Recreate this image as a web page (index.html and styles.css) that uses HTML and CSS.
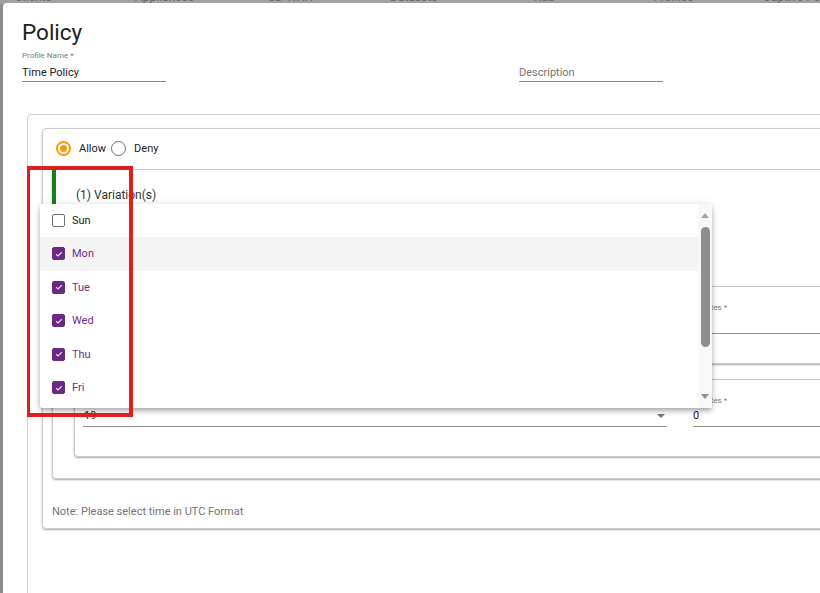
FILE: index.html
```html
<!DOCTYPE html>
<html>
<head>
<meta charset="utf-8">
<title>Policy</title>
<link rel="stylesheet" href="styles.css">
</head>
<body>
<div class="backdrop">
  <nav class="bg-nav">
    <span>Clients</span><span>Appliances</span><span>SD-WAN</span><span>Datasets</span><span>Hub</span><span>Profiles</span><span>Captive Portal</span>
  </nav>
  <div class="bg-main"><aside class="bg-side"></aside></div>
</div>

<div class="dialog">
  <h1 class="title">Policy</h1>
  <div class="top-fields">
    <div class="field">
      <label class="field-label">Profile Name *</label>
      <div class="field-value">Time Policy</div>
    </div>
    <div class="field">
      <label class="field-label">&nbsp;</label>
      <div class="field-value placeholder">Description</div>
    </div>
  </div>

  <section class="box-a">
    <div class="box-b">
      <div class="radio-row">
        <span class="radio on"></span><span class="radio-label">Allow</span>
        <span class="radio"></span><span class="radio-label">Deny</span>
      </div>
      <div class="box-b-body">
        <div class="variation">
          <div class="variation-head">(1) Variation(s)</div>
          <div class="days-field">
            <div class="tf-value empty">&nbsp;</div>
          </div>
          <div class="time-box">
            <div class="time-row">
              <div class="tf">
                <label class="field-label">Minutes *</label>
                <div class="tf-value select"><span>&nbsp;</span><span class="caret"></span></div>
              </div>
              <div class="tf">
                <label class="field-label">Minutes *</label>
                <div class="tf-value">&nbsp;</div>
              </div>
            </div>
          </div>
          <div class="time-box">
            <div class="time-row">
              <div class="tf">
                <label class="field-label">&nbsp;</label>
                <div class="tf-value select"><span>19</span><span class="caret"></span></div>
              </div>
              <div class="tf">
                <label class="field-label">Minutes *</label>
                <div class="tf-value">0</div>
              </div>
            </div>
          </div>
        </div>
        <p class="note">Note: Please select time in UTC Format</p>
      </div>
    </div>
  </section>
</div>

<div class="menu">
  <div class="menu-list">
    <div class="opt plain"><span class="cb"></span><span>Sun</span></div>
    <div class="opt active"><span class="cb checked"><svg viewBox="0 0 10 10" width="10" height="10"><path d="M2.2 5.2 L4.1 7 L7.8 3.1" fill="none" stroke="#e9dff0" stroke-width="1.2"/></svg></span><span>Mon</span></div>
    <div class="opt"><span class="cb checked"><svg viewBox="0 0 10 10" width="10" height="10"><path d="M2.2 5.2 L4.1 7 L7.8 3.1" fill="none" stroke="#e9dff0" stroke-width="1.2"/></svg></span><span>Tue</span></div>
    <div class="opt"><span class="cb checked"><svg viewBox="0 0 10 10" width="10" height="10"><path d="M2.2 5.2 L4.1 7 L7.8 3.1" fill="none" stroke="#e9dff0" stroke-width="1.2"/></svg></span><span>Wed</span></div>
    <div class="opt"><span class="cb checked"><svg viewBox="0 0 10 10" width="10" height="10"><path d="M2.2 5.2 L4.1 7 L7.8 3.1" fill="none" stroke="#e9dff0" stroke-width="1.2"/></svg></span><span>Thu</span></div>
    <div class="opt"><span class="cb checked"><svg viewBox="0 0 10 10" width="10" height="10"><path d="M2.2 5.2 L4.1 7 L7.8 3.1" fill="none" stroke="#e9dff0" stroke-width="1.2"/></svg></span><span>Fri</span></div>
  </div>
  <div class="scroll">
    <span class="scroll-up"></span>
    <span class="thumb"></span>
    <span class="scroll-down"></span>
  </div>
</div>

<div class="annot"></div>
</body>
</html>
```

FILE: styles.css
```css
* { box-sizing: border-box; }
html, body { margin: 0; padding: 0; }
body {
  width: 820px;
  height: 593px;
  overflow: hidden;
  position: relative;
  background: #a1a1a1;
  font-family: Roboto, "Liberation Sans", sans-serif;
  color: #212121;
}

/* dimmed page behind the dialog */
.backdrop { height: 100%; display: flex; flex-direction: column; }
.bg-nav {
  display: grid;
  grid-template-columns: 120px 133px 122px 143px 120px 110px auto;
  padding-left: 15px;
  margin-top: -10px;
  height: 14px;
  line-height: 14px;
  font-size: 12px;
  color: #6a6a6a;
  white-space: nowrap;
}
.bg-main { flex: 1; display: flex; }
.bg-side { width: 60px; background: #8b8b8b; }

/* dialog */
.dialog {
  position: absolute;
  left: 3px;
  top: 3px;
  width: 900px;
  height: 640px;
  background: #fff;
  border-radius: 4px;
  padding: 16px 20px 0 19px;
}
.title {
  margin: 0;
  font-size: 22.5px;
  font-weight: 400;
  line-height: 27px;
  color: #212121;
}
.top-fields {
  display: grid;
  grid-template-columns: 144px 144px;
  column-gap: 353px;
  margin-top: 5px;
}
.field-label {
  display: block;
  font-size: 8px;
  line-height: 10px;
  color: #7a7a7a;
  white-space: nowrap;
}
.field-value {
  margin-top: 5px;
  font-size: 11px;
  line-height: 14px;
  padding-bottom: 1px;
  border-bottom: 1px solid #8c8c8c;
}
.placeholder { color: #757575; }

.box-a {
  margin: 32px 0 0 5px;
  border: 1px solid #d0d0d0;
  border-radius: 4px;
  padding: 13px 14px 80px 14px;
}
.box-b {
  border: 1px solid #cdcdcd;
  border-radius: 4px;
  box-shadow: 0 1px 2px rgba(0, 0, 0, 0.35);
}
.radio-row {
  display: flex;
  align-items: center;
  height: 41px;
  padding: 0 0 2px 13px;
  border-bottom: 1px solid #d3d3d3;
  font-size: 11px;
  color: #212121;
}
.radio {
  flex: none;
  width: 15px;
  height: 15px;
  border: 1.5px solid #6e6e6e;
  border-radius: 50%;
  display: flex;
  align-items: center;
  justify-content: center;
}
.radio.on { border: 2px solid #ff9800; }
.radio.on::after {
  content: "";
  width: 7px;
  height: 7px;
  border-radius: 50%;
  background: #ff9800;
}
.radio-label { margin: 0 5px 0 8px; }

.box-b-body { padding: 0 9px 9px 9px; }

.variation {
  position: relative;
  border: 1px solid #cbcbcb;
  border-top: 0;
  border-radius: 0 0 4px 4px;
  box-shadow: 0 1px 2px rgba(0, 0, 0, 0.35);
  padding: 0 21px 21px 21px;
}
.variation::before {
  content: "";
  position: absolute;
  left: -1px;
  top: 0;
  width: 4px;
  height: 64px;
  background: #1b7d1b;
}
.variation-head {
  padding: 17px 0 0 2px;
  font-size: 12px;
  line-height: 16px;
  color: #333;
}
.days-field {
  margin: 27px 0 38px 9px;
  width: 584px;
}
.tf-value {
  margin-top: 3px;
  font-size: 11px;
  line-height: 14px;
  padding-bottom: 3px;
  border-bottom: 1px solid #8f8f8f;
  color: #212121;
}
.time-box {
  border: 1px solid #c8c8c8;
  border-radius: 4px;
  box-shadow: 0 1px 2px rgba(0, 0, 0, 0.35);
  padding: 16px 0 29px 8px;
}
.time-box + .time-box { margin-top: 15px; }
.time-row {
  display: grid;
  grid-template-columns: 584px 300px;
  column-gap: 26px;
}
.select {
  display: flex;
  align-items: center;
  justify-content: space-between;
  padding-left: 1px;
}
.caret {
  width: 0;
  height: 0;
  margin-right: 2px;
  border-left: 4px solid transparent;
  border-right: 4px solid transparent;
  border-top: 4px solid #757575;
}
.note {
  margin: 26px 0 0 0;
  font-size: 11px;
  line-height: 14px;
  color: #757575;
}

/* open select panel */
.menu {
  position: absolute;
  left: 40px;
  top: 204px;
  width: 672px;
  height: 204px;
  background: #fff;
  display: flex;
  overflow: hidden;
  border-radius: 2px;
  box-shadow: 0 2px 4px -1px rgba(0, 0, 0, 0.2), 0 4px 5px 0 rgba(0, 0, 0, 0.14), 0 1px 10px 0 rgba(0, 0, 0, 0.12);
}
.menu-list { flex: 1; margin-top: -0.5px; }
.opt {
  height: 33.5px;
  display: flex;
  align-items: center;
  gap: 7px;
  padding-left: 12px;
  font-size: 11px;
  color: #6e2d88;
}
.opt.plain { color: #212121; }
.opt.active { background: #f4f4f4; }
.cb {
  flex: none;
  width: 13px;
  height: 13px;
  border: 1.5px solid #737373;
  border-radius: 2px;
  display: flex;
  align-items: center;
  justify-content: center;
}
.cb.checked { background: #6a2a84; border-color: #6a2a84; }
.scroll {
  width: 14px;
  background: #f8f8f8;
  display: flex;
  flex-direction: column;
  align-items: center;
}
.scroll-up {
  margin-top: 9px;
  width: 0;
  height: 0;
  border-left: 4px solid transparent;
  border-right: 4px solid transparent;
  border-bottom: 5px solid #a3a3a3;
}
.thumb {
  margin-top: 9px;
  width: 9px;
  height: 120px;
  border-radius: 5px;
  background: #8e8e8e;
}
.scroll-down {
  margin-top: auto;
  margin-bottom: 9px;
  width: 0;
  height: 0;
  border-left: 4px solid transparent;
  border-right: 4px solid transparent;
  border-top: 5px solid #8e8e8e;
}

/* red annotation frame */
.annot {
  position: absolute;
  left: 27px;
  top: 166px;
  width: 106px;
  height: 251px;
  border: 4px solid #e31c1c;
  border-left-width: 3px;
}
```
